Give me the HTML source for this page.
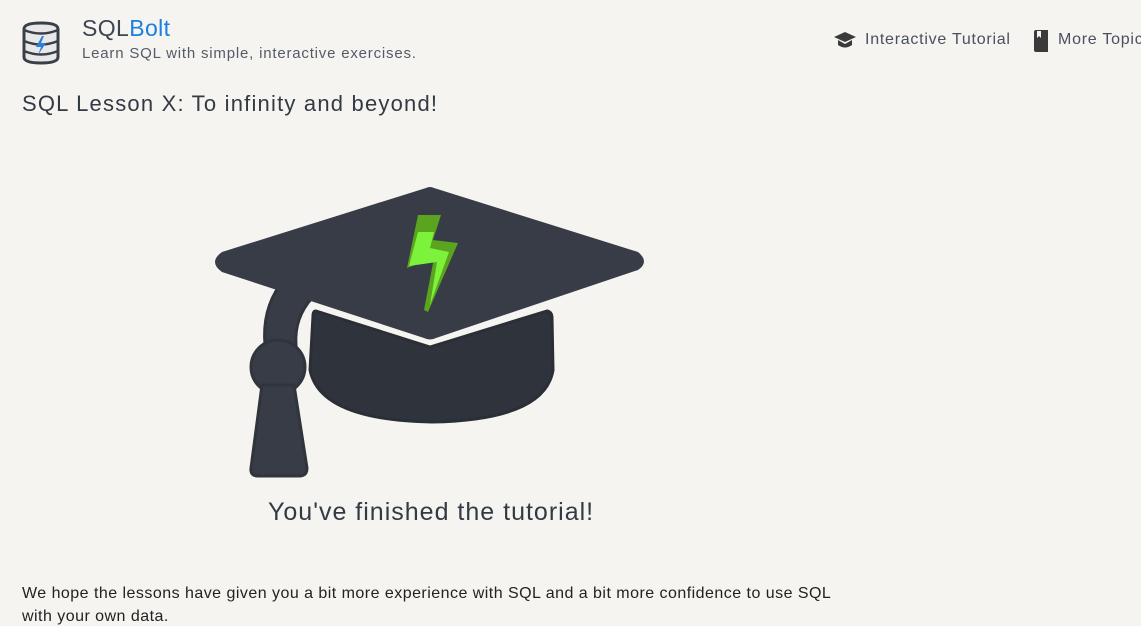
<!DOCTYPE html>
<html><head><meta charset="utf-8"><style>
body{margin:0;background:#f5f4f0;font-family:"Liberation Sans",sans-serif;color:#333;width:1141px;height:617px;overflow:hidden;position:relative}
.t{position:absolute;white-space:nowrap}
</style></head><body>
<svg class="t" style="left:22px;top:21px" width="38" height="44" viewBox="0 0 38 44">
<path d="M2 8 Q2 2 19 2 Q36 2 36 8 V36 Q36 42 19 42 Q2 42 2 36Z" fill="#e8e8e8" stroke="#3a3f47" stroke-width="3"/>
<path d="M2 9 Q19 16 36 9 M2 20 Q19 27 36 20 M2 30 Q19 37 36 30" fill="none" stroke="#3a3f47" stroke-width="2.5"/>
<path d="M20 15 L14 26 L19 26 L16 34 L24 22 L19 22 L22 15Z" fill="#2b7fd9"/>
</svg>
<div class="t" style="left:82px;top:15px;font-size:23px;color:#3d4451;letter-spacing:0.4px">SQL<span style="color:#1a7fe0">Bolt</span></div>
<div class="t" style="left:82px;top:45px;font-size:15px;color:#555b66;letter-spacing:0.8px">Learn SQL with simple, interactive exercises.</div>
<svg class="t" style="left:833px;top:31px" width="24" height="20" viewBox="0 0 24 20"><path d="M12 1 L23 6 L12 11 L1 6Z M5 9 V14 Q12 19 19 14 V9 L12 13Z" fill="#3a3a3a"/></svg>
<div class="t" style="left:865px;top:31px;font-size:16px;color:#4a505c;letter-spacing:0.75px">Interactive Tutorial</div>
<svg class="t" style="left:1033px;top:30px" width="16" height="22" viewBox="0 0 16 22"><path d="M1 2 Q1 0 3 0 H15 V22 H3 Q1 22 1 20Z" fill="#3a3a3a"/><path d="M4 1 V8 L6 6 L8 8 V1Z" fill="#f5f4f0"/></svg>
<div class="t" style="left:1058px;top:31px;font-size:16px;color:#4a505c;letter-spacing:0.75px">More Topics</div>
<div class="t" style="left:22px;top:91px;font-size:22px;color:#333a44;letter-spacing:1.2px">SQL Lesson X: To infinity and beyond!</div>
<svg class="t" style="left:0;top:0" width="700" height="500" viewBox="0 0 700 500">
<path d="M280 285 Q262 310 265 345 L296 345 Q294 318 312 298Z" fill="#373c47" stroke="#30343c" stroke-width="3"/>
<circle cx="278" cy="367" r="27" fill="#373c47" stroke="#30343c" stroke-width="3"/>
<path d="M262 385 H294 L307 468 Q307 476 299 476 H258 Q250 476 251 468Z" fill="#373c47" stroke="#30343c" stroke-width="3"/>
<path d="M316 311 L430 347 L547 311 Q552 312 552 318 L553 370 Q545 420 432 422 Q320 420 310 370 L313 316 Q313 311 316 311Z" fill="#2f333b" stroke="#2a2e35" stroke-width="3"/>
<path d="M222 252 L426 188 Q430 186 434 188 L638 252 Q650 262 638 270 L436 338 Q430 341 424 338 L222 272 Q208 262 222 252Z" fill="#373c47"/>
<path d="M418 215 L441 215 L433 240 L458 243 L428 312 L424 310 L434 258 L407 268Z" fill="#5aa41f"/>
<path d="M418 232 L434 232 L430 248 L449 252 L430 305 L437 262 L409 266Z" fill="#7cf33a"/>
</svg>
<div class="t" style="left:268px;top:498px;font-size:25px;color:#333a44;letter-spacing:1px">You've finished the tutorial!</div>
<div class="t" style="left:22px;top:585px;font-size:16px;color:#222;letter-spacing:0.47px">We hope the lessons have given you a bit more experience with SQL and a bit more confidence to use SQL</div>
<div class="t" style="left:22px;top:608px;font-size:16px;color:#222;letter-spacing:0.47px">with your own data.</div>
</body></html>
